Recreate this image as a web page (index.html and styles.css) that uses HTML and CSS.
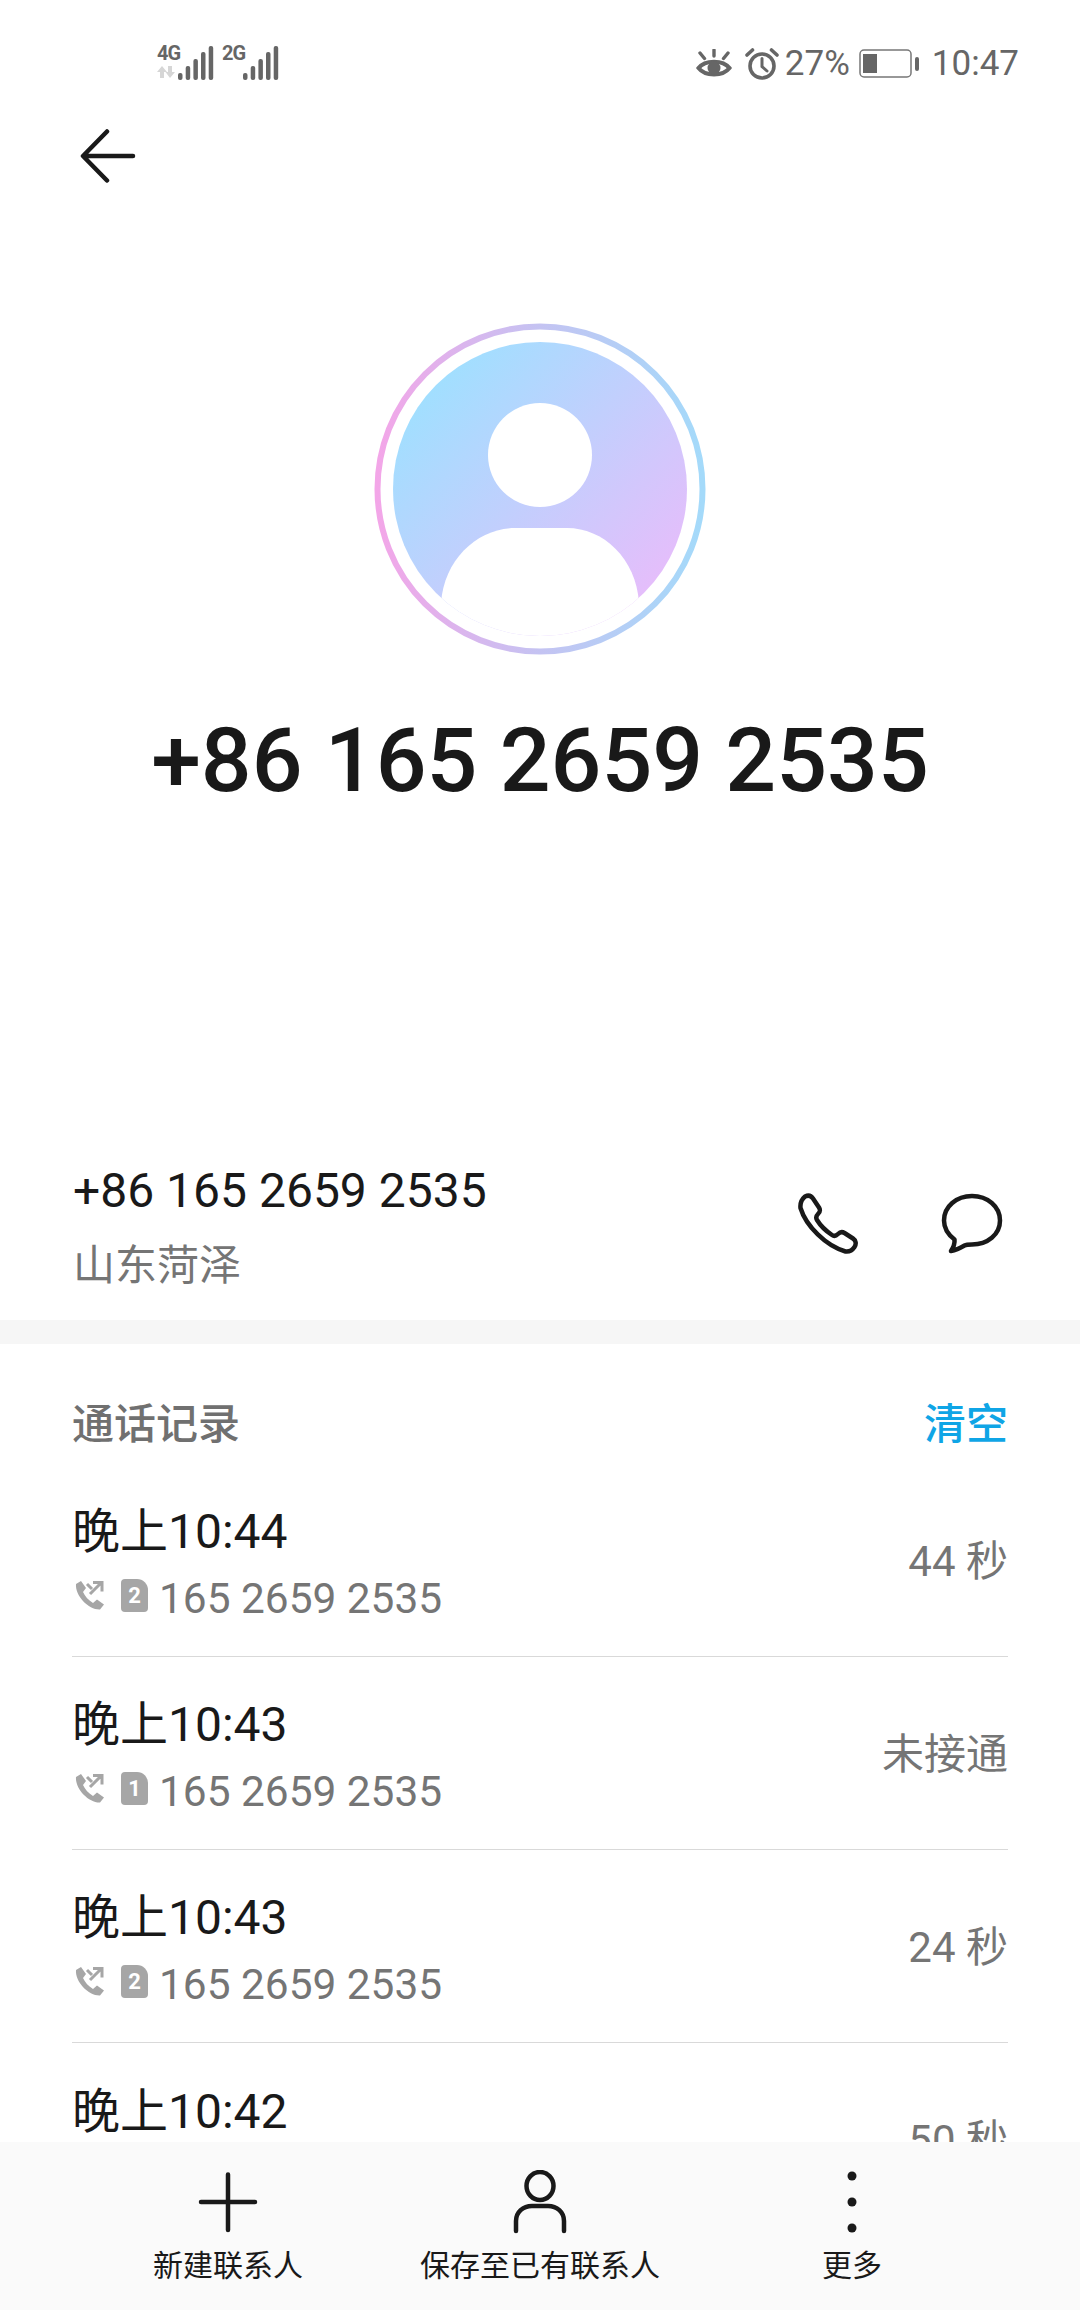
FILE: index.html
```html
<!DOCTYPE html>
<html lang="zh">
<head>
<meta charset="utf-8">
<title>通话记录</title>
<link rel="stylesheet" href="styles.css">
</head>
<body>
<div class="screen">
  <div class="scroll">
    <div class="status">
      <div class="signals">
        <div class="sig">
          <div class="sig-net"><span class="net-label">4G</span>
            <svg class="arrows" width="19" height="12" viewBox="0 0 19 12"><path d="M5 0 L10 6 H7 V12 H3 V6 H0Z M13 12 L8.500 6 H11 V0 H15 V6 H18Z" fill="#d6d6d6"/></svg>
          </div>
          <svg class="bars" width="36" height="34" viewBox="0 0 36 34"><g fill="#666"><rect x="0" y="27" width="4.500" height="7" rx="2"/><rect x="7.700" y="20" width="4.500" height="14" rx="2"/><rect x="15.400" y="13" width="4.500" height="21" rx="2"/><rect x="23" y="6" width="4.500" height="28" rx="2"/><rect x="30.700" y="0" width="4.500" height="34" rx="2"/></g></svg>
        </div>
        <div class="sig">
          <div class="sig-net"><span class="net-label">2G</span></div>
          <svg class="bars" width="36" height="34" viewBox="0 0 36 34"><g fill="#666"><rect x="0" y="27" width="4.500" height="7" rx="2"/><rect x="7.700" y="20" width="4.500" height="14" rx="2"/><rect x="15.400" y="13" width="4.500" height="21" rx="2"/><rect x="23" y="6" width="4.500" height="28" rx="2"/><rect x="30.700" y="0" width="4.500" height="34" rx="2"/></g></svg>
        </div>
      </div>
      <div class="status-right">
        <svg class="eye" width="36" height="31" viewBox="0 0 36 31"><g fill="none" stroke="#666" stroke-width="4"><path d="M2.500 19 C9 10.500 27 10.500 33.500 19 C27 27.500 9 27.500 2.500 19Z"/><path d="M18 1 V7 M4 4 L8.500 9.500 M32 4 L27.500 9.500" stroke-linecap="round" stroke-width="3.400"/></g><circle cx="18" cy="19" r="6.500" fill="#666"/></svg>
        <svg class="clock" width="34" height="32" viewBox="0 0 34 32"><g fill="none" stroke="#666" stroke-width="3.600" stroke-linecap="round"><circle cx="17" cy="18" r="12"/><path d="M17 10.500 V18.500 L22 23" stroke-width="3"/><path d="M2 7 L7.500 2 M32 7 L26.500 2"/></g></svg>
        <span class="pct">27%</span>
        <svg class="battery" width="60" height="30" viewBox="0 0 60 30"><rect x="1" y="1" width="51" height="27" rx="4" fill="none" stroke="#777" stroke-width="1.500"/><rect x="4" y="5" width="14" height="19" fill="#666"/><rect x="56" y="8" width="4" height="14" rx="2" fill="#666"/></svg>
        <span class="clock-time">10:47</span>
      </div>
    </div>

    <div class="nav">
      <svg width="56" height="54" viewBox="0 0 56 54"><path d="M53 27 H4 M27 2.500 L3 27 L27 51.500" fill="none" stroke="#191919" stroke-width="4.500" stroke-linecap="round" stroke-linejoin="round"/></svg>
    </div>

    <div class="hero">
      <svg class="avatar" width="332" height="332" viewBox="0 0 332 332">
        <defs>
          <linearGradient id="ring" x1="0" y1="0.5" x2="1" y2="0.5"><stop offset="0" stop-color="#f3a6e8"/><stop offset="0.5" stop-color="#c4c3f2"/><stop offset="1" stop-color="#a4dafa"/></linearGradient>
          <linearGradient id="disc" x1="0.12" y1="0.12" x2="0.88" y2="0.82"><stop offset="0" stop-color="#9fe0ff"/><stop offset="1" stop-color="#e4befb"/></linearGradient>
          <clipPath id="discClip"><circle cx="166" cy="166" r="147"/></clipPath>
        </defs>
        <circle cx="166" cy="166" r="162.500" fill="none" stroke="url(#ring)" stroke-width="6"/>
        <circle cx="166" cy="166" r="147" fill="url(#disc)"/>
        <circle cx="166" cy="132" r="52" fill="#fff"/>
        <path clip-path="url(#discClip)" d="M67 280 C70 235 105 205 141 205 H193 C229 205 262 235 265 280 V320 H67Z" fill="#fff"/>
      </svg>
      <h1 class="hero-num">+86 165 2659 2535</h1>
    </div>

    <div class="detail">
      <div class="detail-text">
        <div class="detail-num">+86 165 2659 2535</div>
        <div class="detail-loc">山东菏泽</div>
      </div>
      <div class="detail-actions">
        <svg width="62" height="62" viewBox="0 0 62 62"><path d="M8 3.500 C11 2 14 2.500 16 5.500 L22 14.500 C23.500 17 23.500 18.500 21 21 C19 23 18.500 24.500 20 27 C24 33.500 29 38 35 42 C37 43.500 39 43 41 41 C43 39 45 38.500 47.500 40 L56 45.500 C59 47.500 59.500 51 57.500 54 C55.500 57 52.500 59 48.500 58.500 C29 53 9 33 3.500 15 C3 10 5 6 8 3.500Z" fill="none" stroke="#191919" stroke-width="4.500" stroke-linejoin="round"/></svg>
        <svg width="62" height="62" viewBox="0 0 62 62"><path d="M31 3 C46.500 3 59 13.500 59 27.500 C59 41.500 46.500 51.500 31 51.500 C27.500 51.500 25.500 51.500 23.500 52.500 C20 54.500 15 57 10 58 C12 55 14 51 13.500 46.500 C7 41.500 3 35 3 27.500 C3 13.500 15.500 3 31 3Z" fill="none" stroke="#191919" stroke-width="4.500" stroke-linejoin="round"/></svg>
      </div>
    </div>

    <div class="band"></div>

    <div class="log">
      <div class="log-head">
        <span class="log-title">通话记录</span>
        <span class="log-clear">清空</span>
      </div>

      <div class="row">
        <div class="row-main">
          <div class="row-time">晚上10:44</div>
          <div class="row-sub">
            <svg class="call-ic" width="32" height="32" viewBox="0 0 32 32"><g fill="#a6a6a6"><path d="M3 5 L8 2 L13 9 L10 13 C12 17 15 21 20 24 L24 20.500 L31 25.500 L27 30.500 C16 31 2 17 3 5Z"/></g><g fill="none" stroke="#a6a6a6" stroke-width="3"><path d="M17 15 L28 4 M20 3.500 H29 V12.500 M14 5 L19 10"/></g></svg>
            <span class="sim">2</span>
            <span class="row-phone">165 2659 2535</span>
          </div>
        </div>
        <div class="row-dur">44 秒</div>
      </div>

      <div class="row">
        <div class="row-main">
          <div class="row-time">晚上10:43</div>
          <div class="row-sub">
            <svg class="call-ic" width="32" height="32" viewBox="0 0 32 32"><g fill="#a6a6a6"><path d="M3 5 L8 2 L13 9 L10 13 C12 17 15 21 20 24 L24 20.500 L31 25.500 L27 30.500 C16 31 2 17 3 5Z"/></g><g fill="none" stroke="#a6a6a6" stroke-width="3"><path d="M17 15 L28 4 M20 3.500 H29 V12.500 M14 5 L19 10"/></g></svg>
            <span class="sim">1</span>
            <span class="row-phone">165 2659 2535</span>
          </div>
        </div>
        <div class="row-dur">未接通</div>
      </div>

      <div class="row">
        <div class="row-main">
          <div class="row-time">晚上10:43</div>
          <div class="row-sub">
            <svg class="call-ic" width="32" height="32" viewBox="0 0 32 32"><g fill="#a6a6a6"><path d="M3 5 L8 2 L13 9 L10 13 C12 17 15 21 20 24 L24 20.500 L31 25.500 L27 30.500 C16 31 2 17 3 5Z"/></g><g fill="none" stroke="#a6a6a6" stroke-width="3"><path d="M17 15 L28 4 M20 3.500 H29 V12.500 M14 5 L19 10"/></g></svg>
            <span class="sim">2</span>
            <span class="row-phone">165 2659 2535</span>
          </div>
        </div>
        <div class="row-dur">24 秒</div>
      </div>

      <div class="row">
        <div class="row-main">
          <div class="row-time">晚上10:42</div>
          <div class="row-sub"></div>
        </div>
        <div class="row-dur">50 秒</div>
      </div>
    </div>
  </div>

  <div class="tabs">
    <div class="tab">
      <svg width="64" height="64" viewBox="0 0 64 64"><path d="M32 4.500 V60 M5 32 H59" fill="none" stroke="#191919" stroke-width="4.500" stroke-linecap="round"/></svg>
      <span class="tab-label">新建联系人</span>
    </div>
    <div class="tab">
      <svg width="64" height="64" viewBox="0 0 64 64"><g fill="none" stroke="#191919" stroke-width="4.500" stroke-linecap="round"><ellipse cx="32" cy="16" rx="13.500" ry="14"/><path d="M8 61 V51 C8 42 15 36 24 36 H40 C49 36 56 42 56 51 V61"/></g></svg>
      <span class="tab-label">保存至已有联系人</span>
    </div>
    <div class="tab">
      <svg width="64" height="64" viewBox="0 0 64 64"><g fill="#191919"><circle cx="32" cy="6" r="4.500"/><circle cx="32" cy="32" r="4.500"/><circle cx="32" cy="58" r="4.500"/></g></svg>
      <span class="tab-label">更多</span>
    </div>
  </div>
</div>
</body>
</html>
```
FILE: styles.css
```css
* { box-sizing: border-box; }
html, body { margin: 0; padding: 0; }
body {
  width: 1080px;
  height: 2310px;
  overflow: hidden;
  background: #fff;
  font-family: Roboto, "Noto Sans CJK SC", sans-serif;
  color: #191919;
}
.screen { display: flex; flex-direction: column; height: 2310px; }
.scroll { height: 2142px; overflow: hidden; flex: none; }

.status {
  height: 90px;
  padding: 44px 61px 0 157px;
  display: flex;
  justify-content: space-between;
  align-items: flex-start;
  color: #666;
}
.signals { display: flex; gap: 8px; }
.sig { display: flex; align-items: flex-end; gap: 1px; height: 36px; }
.sig-net { display: flex; flex-direction: column; width: 20px; height: 36px; }
.net-label {
  font-family: "Liberation Sans Narrow", Roboto, sans-serif;
  font-size: 20px;
  line-height: 18px;
  font-weight: 700;
  letter-spacing: -1px;
}
.arrows { margin-top: 4px; }
.status-right { display: flex; align-items: center; height: 44px; margin-top: -2px; }
.eye { margin-right: 13px; }
.clock { margin-right: 6px; }
.pct { font-size: 35px; line-height: 44px; margin-right: 9px; }
.battery { margin-right: 13px; }
.clock-time { font-size: 35px; line-height: 44px; }

.nav { height: 130px; padding: 39px 0 0 80px; }

.hero { display: flex; flex-direction: column; align-items: center; padding-top: 103px; }
.avatar { display: block; }
.hero-num {
  margin: 53px 0 0;
  font-size: 89.500px;
  line-height: 106px;
  font-weight: 500;
  white-space: nowrap;
}

.detail {
  margin-top: 349px;
  height: 157px;
  padding: 0 77px 0 73px;
  display: flex;
  justify-content: space-between;
  align-items: flex-start;
}
.detail-num { font-size: 48px; line-height: 56px; }
.detail-loc { font-size: 42px; line-height: 56px; margin-top: 19px; color: #757575; }
.detail-actions { display: flex; gap: 82px; padding-top: 30px; }

.band { height: 24px; background: #f6f6f6; }

.log { padding: 0 72px; }
.log-head { height: 120px; display: flex; justify-content: space-between; align-items: center; padding-top: 33px; }
.log-title { font-size: 42px; font-weight: 500; color: #707070; }
.log-clear { font-size: 42px; font-weight: 500; color: #0fa5e6; }

.row {
  height: 193px;
  display: flex;
  justify-content: space-between;
  align-items: center;
  border-bottom: 1.500px solid #d9d9d9;
}
.row:last-child { border-bottom: 0; }
.row-main { display: flex; flex-direction: column; padding-top: 10px; }
.row-time { font-size: 48px; line-height: 66px; color: #191919; }
.row-sub { display: flex; align-items: center; height: 66px; }
.call-ic { margin: -6px 16px 0 1px; flex: none; }
.sim {
  width: 27px;
  height: 33px;
  margin-right: 11px;
  margin-top: -6px;
  background: #a6a6a6;
  color: #fff;
  font-size: 22px;
  font-weight: 700;
  line-height: 33px;
  text-align: center;
  border-radius: 4px 11px 4px 4px;
}
.row-phone { font-size: 42.400px; color: #757575; }
.row-dur { font-size: 42px; color: #757575; padding-bottom: 6px; }

.tabs {
  flex: 1;
  background: #fafafa;
  display: grid;
  grid-template-columns: 312px 312px 312px;
  justify-content: center;
}
.tab {
  display: flex;
  flex-direction: column;
  align-items: center;
  padding-top: 28px;
}
.tab-label { font-size: 30px; line-height: 40px; margin-top: 12px; color: #191919; }
```
